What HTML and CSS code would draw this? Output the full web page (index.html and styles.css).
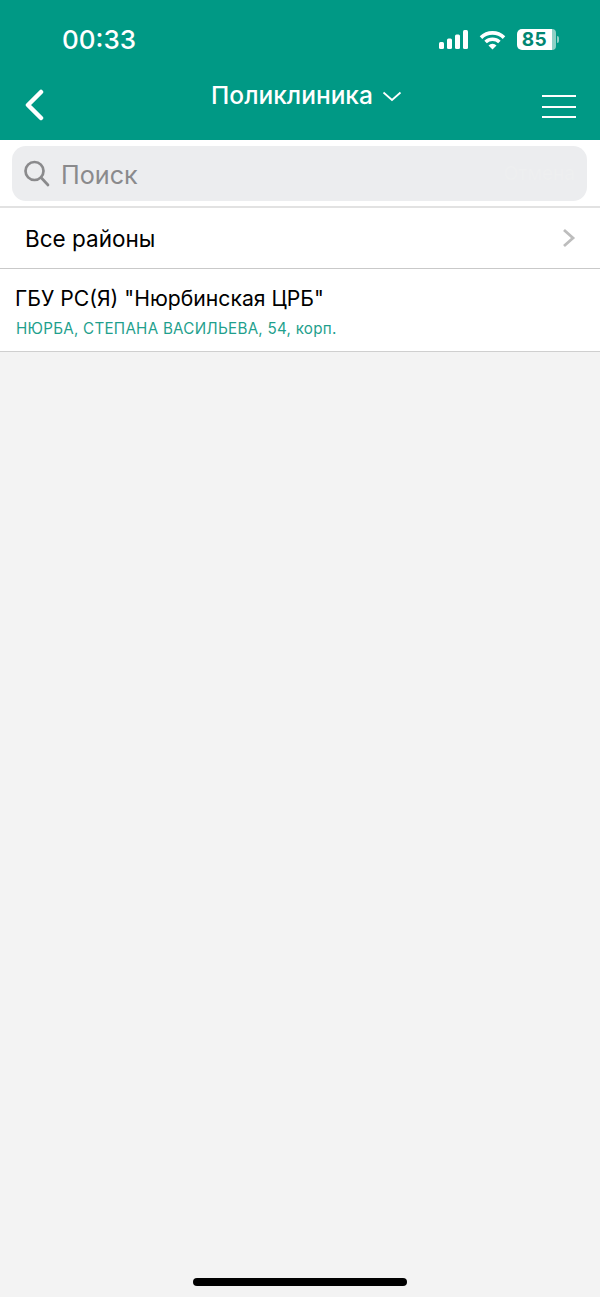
FILE: index.html
```html
<!DOCTYPE html>
<html lang="ru">
<head>
<meta charset="utf-8">
<title>Поликлиника</title>
<link rel="stylesheet" href="styles.css">
</head>
<body>
<div class="screen">
  <header class="header">
    <div class="status">
      <span class="time">00:33</span>
      <div class="status-icons">
        <svg class="signal" width="30" height="19" viewBox="0 0 30 19"><rect x="0" y="12" width="5" height="7" rx="1.5"/><rect x="8" y="8.5" width="5" height="10.5" rx="1.5"/><rect x="16" y="4.5" width="5" height="14.5" rx="1.5"/><rect x="24" y="0" width="5" height="19" rx="1.5"/></svg>
        <svg class="wifi" width="27" height="20" viewBox="0 0 27 20"><path d="M2 7.6a16.4 16.4 0 0 1 23 0" /><path d="M6.6 12a10 10 0 0 1 13.8 0"/><path class="wifi-dot" d="M13.5 19.6l-4-4.2a5.7 5.7 0 0 1 8 0z"/></svg>
        <div class="battery"><span class="battery-level">85</span><span class="battery-rest"></span><span class="battery-cap"></span></div>
      </div>
    </div>
    <div class="nav">
      <svg class="back" width="22" height="32" viewBox="0 0 22 32"><path d="M18 3L5 16l13 13"/></svg>
      <div class="title"><span>Поликлиника</span><svg class="caret" width="20" height="11" viewBox="0 0 20 11"><path d="M1.5 1.500L10 9l8.500-7.500"/></svg></div>
      <div class="menu"><span></span><span></span><span></span></div>
    </div>
  </header>
  <div class="search-bar">
    <div class="search-field">
      <svg class="search-icon" width="27" height="27" viewBox="0 0 27 27"><circle cx="11.500" cy="11" r="9"/><path d="M18 17.500l7 7.500"/></svg>
      <span class="search-placeholder">Поиск</span>
      <span class="search-cancel">Отмена</span>
    </div>
  </div>
  <div class="district">
    <span>Все районы</span>
    <svg class="chevron" width="14" height="20" viewBox="0 0 14 20"><path d="M2 2l9 8-9 8"/></svg>
  </div>
  <div class="clinic">
    <div class="clinic-name">ГБУ РС(Я) "Нюрбинская ЦРБ"</div>
    <div class="clinic-address">НЮРБА, СТЕПАНА ВАСИЛЬЕВА, 54, корп.</div>
  </div>
  <div class="home-indicator"></div>
</div>
</body>
</html>
```
FILE: styles.css
```css
* { box-sizing: border-box; }
html, body { margin: 0; padding: 0; }
body { font-family: Inter, "Liberation Sans", sans-serif; background: #f3f3f3; }
.screen { position: relative; width: 600px; height: 1297px; overflow: hidden; background: #f3f3f3; }

.header { height: 140px; background: #009985; color: #fff; }
.status { display: flex; justify-content: space-between; align-items: center; height: 78px; padding: 1px 41px 0 62px; }
.time { font-size: 26px; font-weight: 500; }
.status-icons { display: flex; align-items: center; gap: 11px; }
.signal { fill: #fff; margin-right: -1px; }
.wifi { fill: none; stroke: #fff; stroke-width: 3.6px; }
.wifi-dot { fill: #fff; stroke: none; }
.battery { display: flex; align-items: center; height: 21px; }
.battery-level { width: 35px; height: 21px; background: #fff; border-radius: 5px 0 0 5px; color: #008672; font-size: 19px; font-weight: 700; line-height: 21px; text-align: center; letter-spacing: 0.5px; }
.battery-rest { width: 4px; height: 21px; background: #8fd0c6; border-radius: 0 5px 5px 0; }
.battery-cap { width: 2px; height: 7px; margin-left: 1px; background: #8fd0c6; border-radius: 0 2px 2px 0; }

.nav { display: flex; justify-content: space-between; align-items: flex-start; height: 62px; padding: 0 24px 0 23px; }
.back { margin-top: 11px; fill: none; stroke: #fff; stroke-width: 4.500px; stroke-linecap: round; stroke-linejoin: round; }
.title { display: flex; align-items: center; gap: 9px; margin: 2px 0 0 26px; height: 30px; font-size: 24.500px; font-weight: 500; }
.caret { margin-top: 2px; fill: none; stroke: #fff; stroke-width: 1.700px; }
.menu { display: flex; flex-direction: column; gap: 8.500px; width: 34px; margin-top: 17px; }
.menu span { display: block; height: 2px; background: #fff; }

.search-bar { height: 68px; padding: 6px 13px 0 12px; background: #fff; border-bottom: 2px solid #e2e2e2; }
.search-field { display: flex; align-items: center; height: 55px; padding: 0 12px 0 11px; border-radius: 14px; background: #ecedef; }
.search-icon { flex: none; fill: none; stroke: #8a8a8c; stroke-width: 2.700px; stroke-linecap: round; }
.search-placeholder { margin-left: 11px; margin-top: 2px; font-size: 25.200px; color: #8a8a8c; }
.search-cancel { margin-left: auto; font-size: 19px; color: #eeeff0; }

.district { display: flex; justify-content: space-between; align-items: center; height: 61px; padding: 0 24px 0 25px; background: #fff; border-bottom: 1px solid #c9c9c9; font-size: 22.500px; color: #000; }
.chevron { fill: none; stroke: #bdbdbd; stroke-width: 2.800px; }

.clinic { height: 83px; padding: 15px 16px 0 15px; background: #fff; border-bottom: 1px solid #cfcfcf; }
.clinic-name { font-size: 21.200px; line-height: 28px; color: #000; }
.clinic-address { margin: 8px 0 0 1px; font-size: 15.200px; line-height: 18px; color: #1f9f8d; letter-spacing: 0.25px; }

.home-indicator { position: absolute; left: 193px; top: 1278px; width: 214px; height: 8px; border-radius: 4px; background: #000; }
```
